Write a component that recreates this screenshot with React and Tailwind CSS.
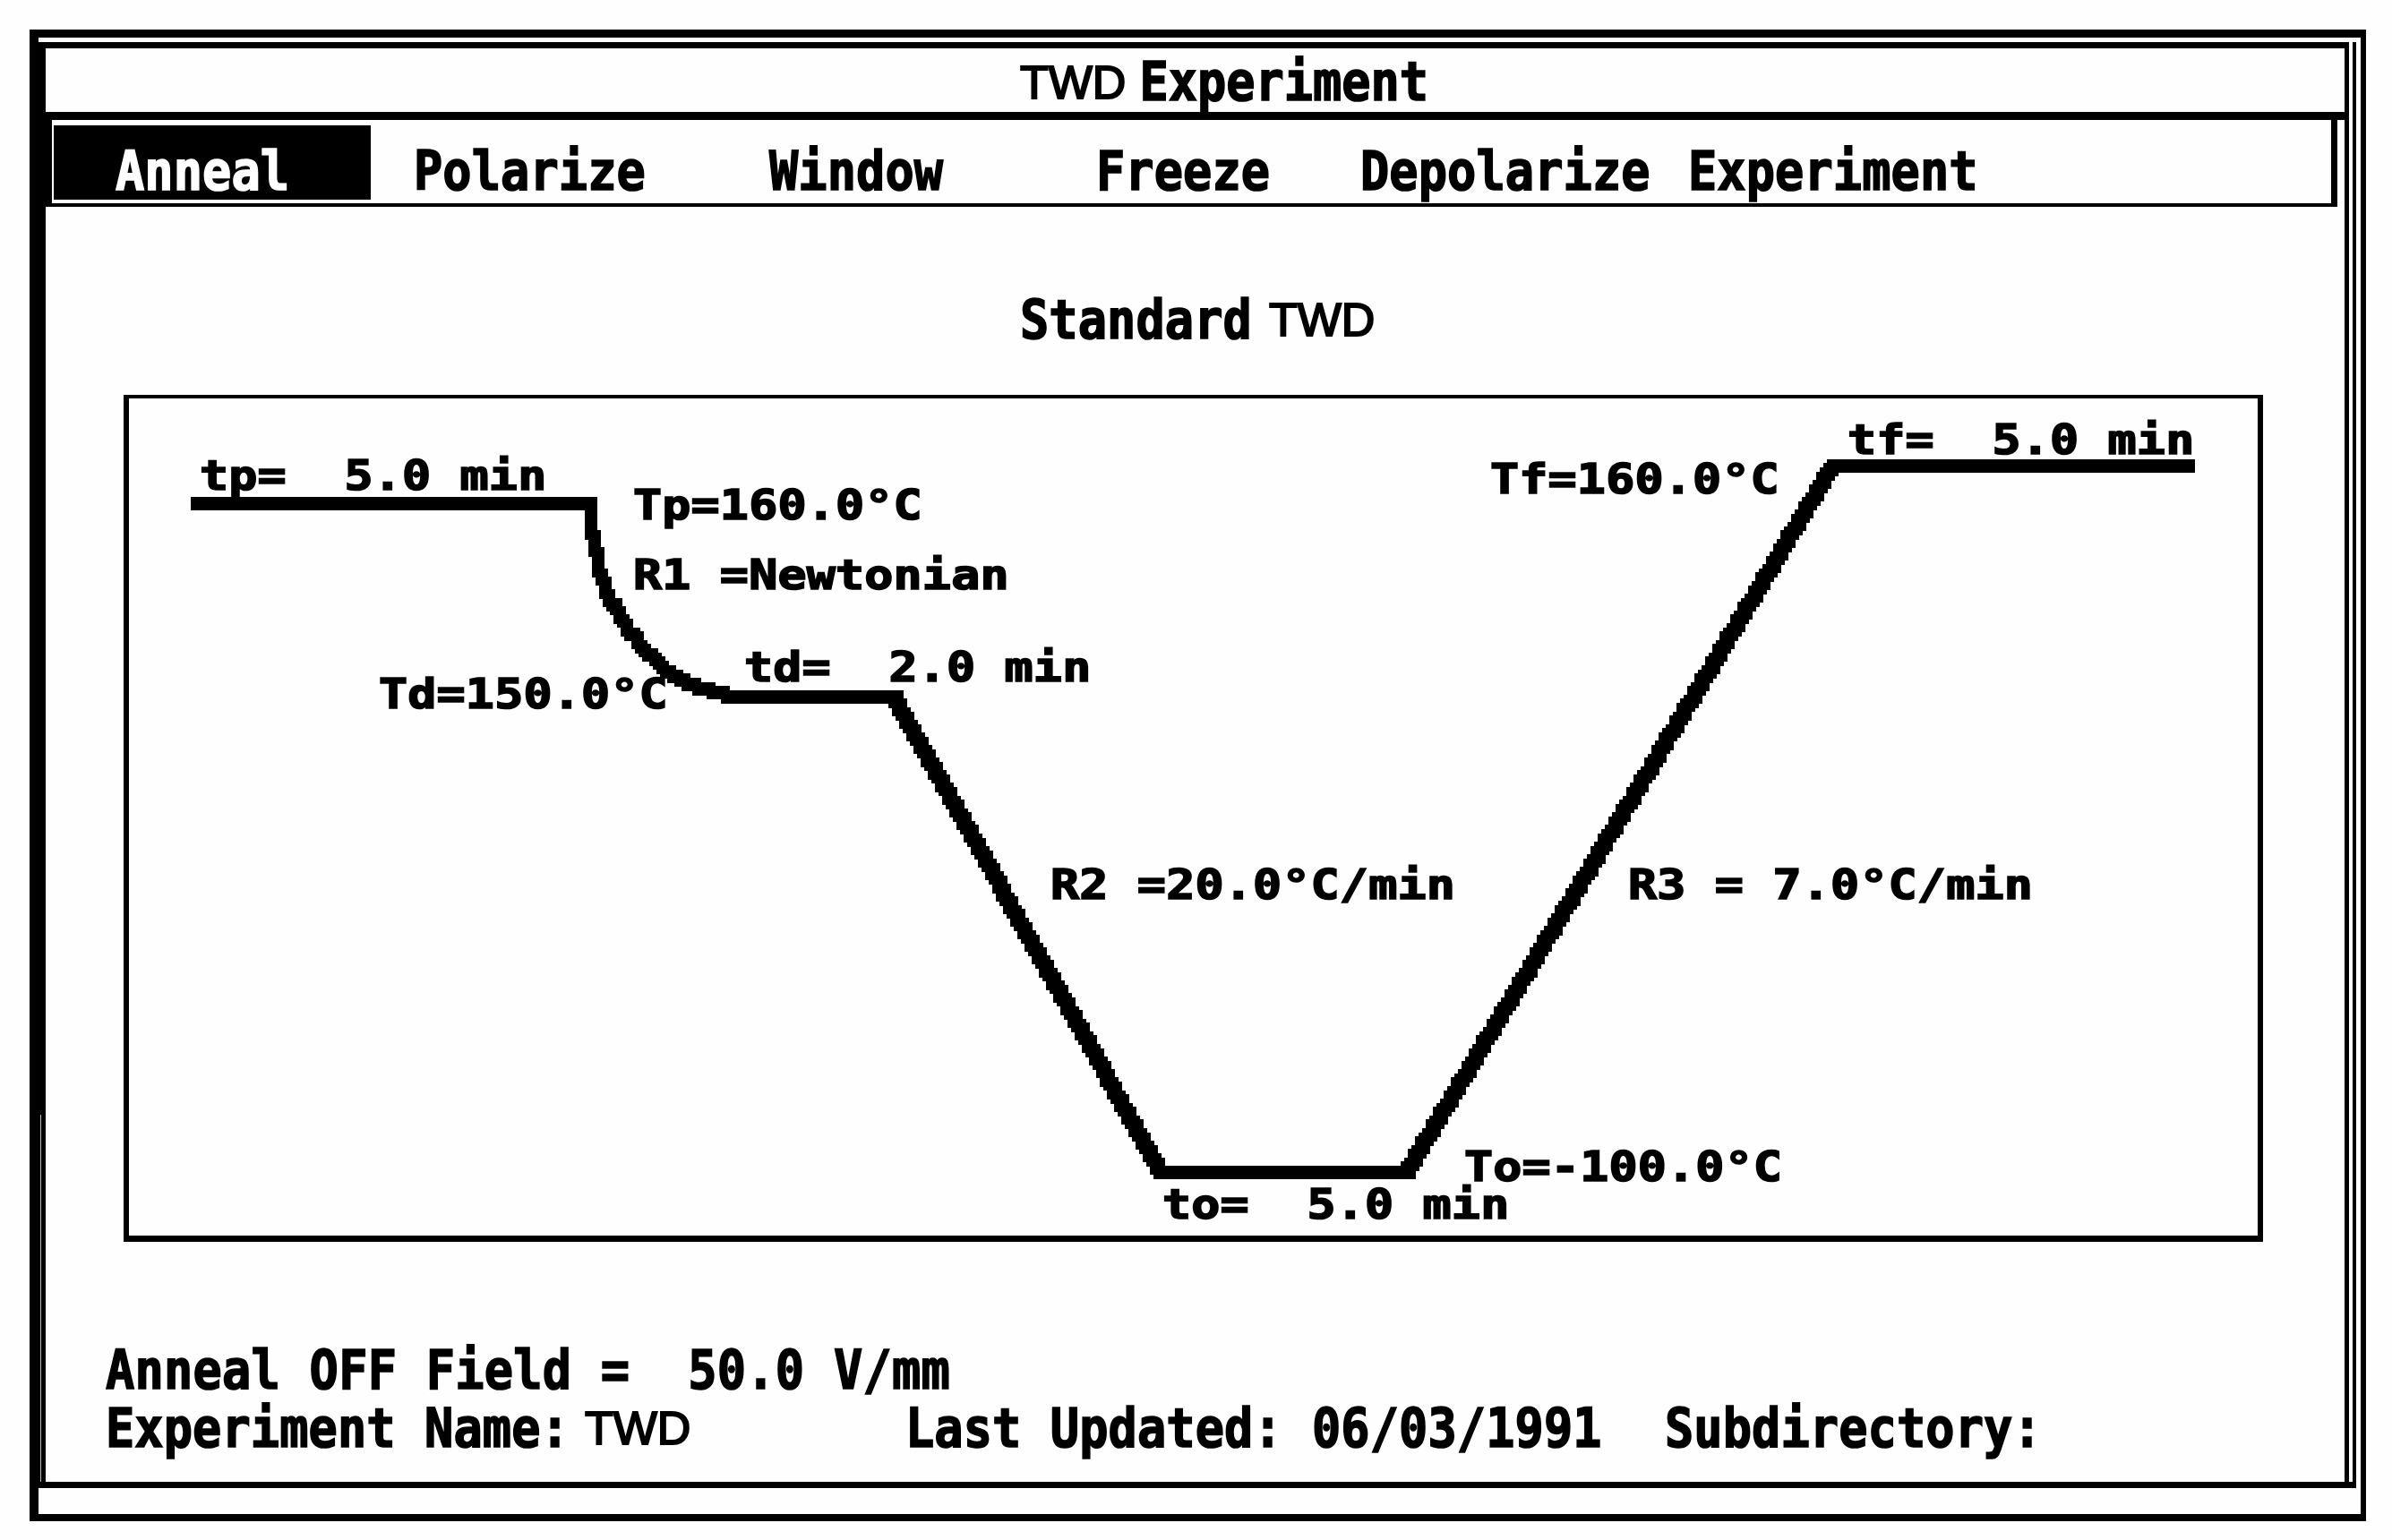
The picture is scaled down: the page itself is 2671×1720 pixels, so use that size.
import clsx from "clsx";

const menu = [
  { label: "Anneal", width: "w-[354px]", pad: "pl-[69px]", active: true },
  { label: "Polarize", width: "w-[396px]", pad: "pl-[48px]" },
  { label: "Window", width: "w-[365px]", pad: "pl-[49px]" },
  { label: "Freeze", width: "w-[295px]", pad: "pl-[49px]" },
  { label: "Depolarize", width: "w-[366px]", pad: "pl-[49px]" },
  { label: "Experiment", width: "w-[366px]", pad: "pl-[49px]" },
];

// left edge and baseline of every label, in page pixels
const labels = [
  { x: 223, y: 548, text: "tp=  5.0 min" },
  { x: 707, y: 581, text: "Tp=160.0°C" },
  { x: 707, y: 659, text: "R1 =Newtonian" },
  { x: 831, y: 762, text: "td=  2.0 min" },
  { x: 423, y: 792, text: "Td=150.0°C" },
  { x: 1173, y: 1005, text: "R2 =20.0°C/min" },
  { x: 1635, y: 1320, text: "To=-100.0°C" },
  { x: 1298, y: 1362, text: "to=  5.0 min" },
  { x: 1664, y: 552, text: "Tf=160.0°C" },
  { x: 2063, y: 508, text: "tf=  5.0 min" },
  { x: 1818, y: 1005, text: "R3 = 7.0°C/min" },
];

const profile = [
  [220, 560], [658, 560], [658, 582], [663, 603], [669, 636], [679, 664], [691, 686],
  [704, 706], [720, 726], [738, 744], [760, 759], [783, 769], [806, 776], [818, 779],
  [998, 779], [1296, 1308], [1570, 1308], [2046, 520], [2444, 520],
];

const STEP_X = 4;
const STEP_Y = 4.7;

// stamps a square pen along the profile, snapped to the coarse screen grid
function profilePath(points) {
  const seen = new Set();
  for (let i = 1; i < points.length; i++) {
    const [x0, y0] = points[i - 1];
    const [x1, y1] = points[i];
    // the long ramps are drawn with a slightly wider pen
    const w = Math.abs(y1 - y0) > 100 ? 17 : 14;
    const n = Math.max(1, Math.ceil(Math.max(Math.abs(x1 - x0) / STEP_X, Math.abs(y1 - y0) / STEP_Y)));
    for (let k = 0; k <= n; k++) {
      const x = Math.round((x0 + ((x1 - x0) * k) / n) / STEP_X) * STEP_X;
      const y = Math.round((y0 + ((y1 - y0) * k) / n - 520) / STEP_Y) * STEP_Y + 520;
      seen.add(`M${x - w / 2} ${(y - 7.5).toFixed(1)}h${w}v15h-${w}z`);
    }
  }
  return [...seen].join("");
}

function Dos({ children, className }) {
  return (
    <span className={clsx("inline-block whitespace-pre mt-[7px] mb-px font-['DejaVu_Sans_Mono',monospace] font-bold text-[53.6px] leading-[54px] origin-[0_46px] scale-y-[1.14] [-webkit-text-stroke:1.5px_currentColor]", className || "tracking-[0.1px]")}>
      {children}
    </span>
  );
}

function Twd({ className }) {
  return <span className={clsx("inline-block font-['Liberation_Sans',sans-serif] text-[52px] leading-[62px] [-webkit-text-stroke:2px_#000]", className)}>TWD</span>;
}

function Label({ x, y, text }) {
  return (
    <div
      className="absolute whitespace-pre font-['DejaVu_Sans_Mono',monospace] font-bold text-[53.3px] leading-[62px] tracking-[0.2px] origin-[0_50px] scale-y-[0.87] [-webkit-text-stroke:2px_#000]"
      style={{ left: x - 144, top: y - 50 - 445 }}
    >
      {text}
    </div>
  );
}

export default function App() {
  return (
    <div className="w-[2671px] h-[1720px] bg-[#fefefe] text-black pt-[33px] pl-[33px] overflow-hidden">
      <div className="w-[2609px] h-[1666px] border-black border-t-[9px] border-r-[6px] border-b-[8px] border-l-[10px] pt-[5px]">
        <div className="relative w-[2588px] h-[1615px] border-black border-r-[4px] border-b-[7px] border-l-[3px] pr-[4px]">
          <div className="absolute left-[-1px] bottom-0 w-px h-[410px] bg-[#bbb]" />
          <div className="h-full border-black border-t-[7px] border-l-[5px] border-r-[5px] flex flex-col">
            <div className="h-[80px] shrink-0 border-b-[9px] border-black flex pl-[1088px] pt-[6px]">
              <Twd className="mt-px" />
              <Dos className="ml-[15px]">Experiment</Dos>
            </div>
            <div className="h-[97px] w-[2559px] shrink-0 border-black border-b-[4px] border-r-[7px] border-l-[7px] flex pl-[2px] pt-[6px]">
              {menu.map((m) => (
                <div key={m.label} className={clsx("h-[83px] shrink-0 flex items-start pt-[20px]", m.width, m.pad, m.active && "bg-black text-white")}>
                  <Dos>{m.label}</Dos>
                </div>
              ))}
            </div>
            <div className="h-[210px] shrink-0 flex pl-[1088px] pt-[95px]">
              <Dos>Standard</Dos>
              <Twd className="ml-[19px]" />
            </div>
            <div className="relative ml-[87px] w-[2389px] h-[946px] shrink-0 border-black border-t-[4px] border-l-[6px] border-r-[6px] border-b-[7px]">
              <svg className="absolute left-0 top-0" width="2377" height="935" viewBox="144 445 2377 935" shapeRendering="crispEdges">
                <path d={profilePath(profile)} />
              </svg>
              {labels.map((l) => <Label key={l.text} {...l} />)}
            </div>
            <div className="flex pl-[67px] pt-[112px]">
              <Dos className="tracking-[0.25px]">Anneal OFF Field =  50.0 V/mm</Dos>
            </div>
            <div className="flex pl-[67px] pt-[3px]">
              <Dos className="w-[535px] tracking-[0.1px]">Experiment Name:</Dos>
              <Twd className="w-[358px]" />
              <Dos className="w-[454px] tracking-[0.1px]">Last Updated:</Dos>
              <Dos className="w-[394px] tracking-[0.1px]">06/03/1991</Dos>
              <Dos>Subdirectory:</Dos>
            </div>
          </div>
        </div>
      </div>
    </div>
  );
}
